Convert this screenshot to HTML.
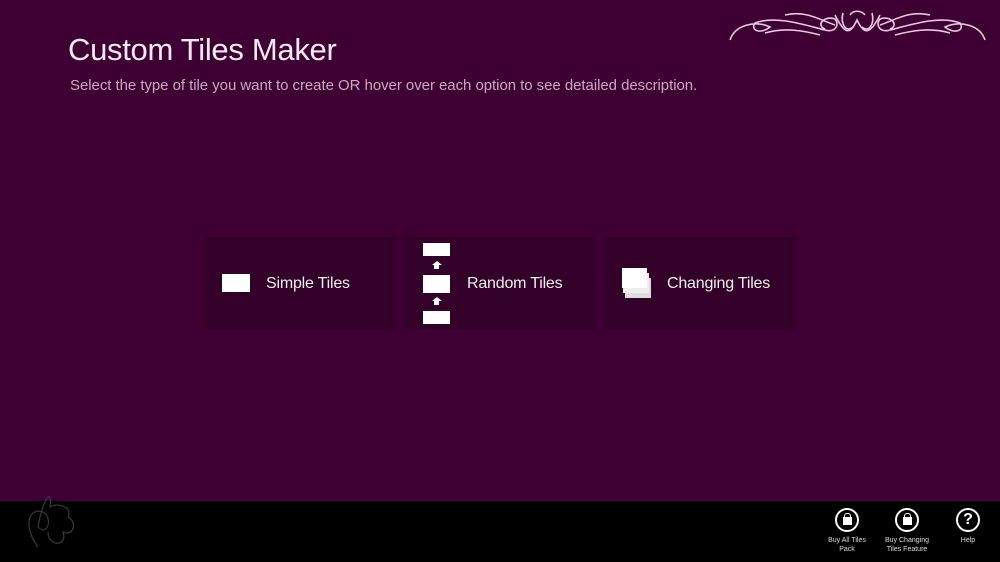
<!DOCTYPE html>
<html><head><meta charset="utf-8"><style>
*{margin:0;padding:0;box-sizing:border-box}
body{width:1000px;height:562px;background:#3e0032;font-family:"Liberation Sans",sans-serif;position:relative;overflow:hidden;color:#fff}
h1{position:absolute;left:68px;top:32px;font-size:31px;font-weight:normal;color:#f3eaf0;letter-spacing:-0.3px}
.sub{position:absolute;left:70px;top:77px;font-size:15px;color:#c9a9c0;letter-spacing:-0.05px}
.tile{position:absolute;top:237px;width:191px;height:92px;background:#320029}
.tile span{position:absolute;top:38px;font-size:16px;color:#eee;letter-spacing:-0.2px}
.w{position:absolute;background:#fff}
.ar{position:absolute;width:0;height:0;border-left:5px solid transparent;border-right:5px solid transparent;border-bottom:4px solid #fff}
.bar{position:absolute;left:0;top:501px;width:1000px;height:61px;background:#000}
.btn{position:absolute;top:508px;width:70px;text-align:center;font-size:7px;color:#ddd;line-height:9px}
.c{width:24px;height:24px;border:2px solid #fff;border-radius:50%;margin:0 auto 4px;position:relative;font-size:16px;font-weight:bold;line-height:20px;color:#fff}
.bag{position:absolute;left:6px;top:7px;width:9px;height:8px;background:#fff}
.bag:before{content:"";position:absolute;left:1px;top:-4px;width:5px;height:4px;border:1px solid #fff;border-bottom:none;border-radius:3px 3px 0 0}
</style></head><body>
<svg style="position:absolute;left:725px;top:5px" width="265" height="38" viewBox="0 0 265 38" fill="none" stroke="#e8c8e0" stroke-width="1.6">
<path d="M5 35 C10 20 30 15 45 22 C35 30 25 25 30 18 C50 10 80 20 100 25 C110 28 115 20 110 14 C100 10 90 20 100 24"/>
<path d="M260 35 C255 20 235 15 220 22 C230 30 240 25 235 18 C215 10 185 20 165 25 C155 28 150 20 155 14 C165 10 175 20 165 24"/>
<path d="M110 10 C120 30 125 30 132 15 C139 30 145 30 155 10"/>
<path d="M125 10 C128 5 136 5 140 10 M118 8 C115 20 122 28 128 22 M147 8 C150 20 143 28 137 22"/>
<path d="M60 10 C80 5 95 15 110 20 M205 10 C185 5 170 15 155 20 M40 28 C60 22 80 26 95 30 M225 28 C205 22 185 26 170 30"/>
</svg>
<h1>Custom Tiles Maker</h1>
<div class="sub">Select the type of tile you want to create OR hover over each option to see detailed description.</div>
<div class="tile" style="left:205px"><div class="w" style="left:17px;top:37px;width:28px;height:18px"></div><span style="left:61px">Simple Tiles</span></div>
<div class="tile" style="left:405px">
<div class="w" style="left:18px;top:6px;width:27px;height:13px"></div>
<div class="ar" style="left:27px;top:24px"></div><div class="w" style="left:29px;top:28px;width:5px;height:4px"></div>
<div class="w" style="left:18px;top:38px;width:27px;height:18px"></div>
<div class="ar" style="left:27px;top:60px"></div><div class="w" style="left:29px;top:64px;width:5px;height:4px"></div>
<div class="w" style="left:18px;top:74px;width:27px;height:13px"></div>
<span style="left:62px">Random Tiles</span></div>
<div class="tile" style="left:605px">
<div class="w" style="left:20px;top:41px;width:26px;height:20px;background:#ddd"></div>
<div class="w" style="left:18px;top:36px;width:26px;height:20px;background:#eee"></div>
<div class="w" style="left:17px;top:31px;width:25px;height:20px"></div>
<span style="left:62px">Changing Tiles</span></div>
<div class="bar"></div>
<svg style="position:absolute;left:8px;top:487px" width="80" height="70" fill="none" stroke="#3a3a3a" stroke-width="1.2"><path d="M30 60 C15 40 20 20 35 25 C45 30 40 50 30 40 C35 10 45 0 42 20 C50 15 65 20 60 30 C70 35 65 50 55 45 C60 60 40 60 40 45"/></svg>
<div class="btn" style="left:812px"><div class="c"><div class="bag"></div></div>Buy All Tiles<br>Pack</div>
<div class="btn" style="left:872px"><div class="c"><div class="bag"></div></div>Buy Changing<br>Tiles Feature</div>
<div class="btn" style="left:933px"><div class="c">?</div>Help</div>
</body></html>
